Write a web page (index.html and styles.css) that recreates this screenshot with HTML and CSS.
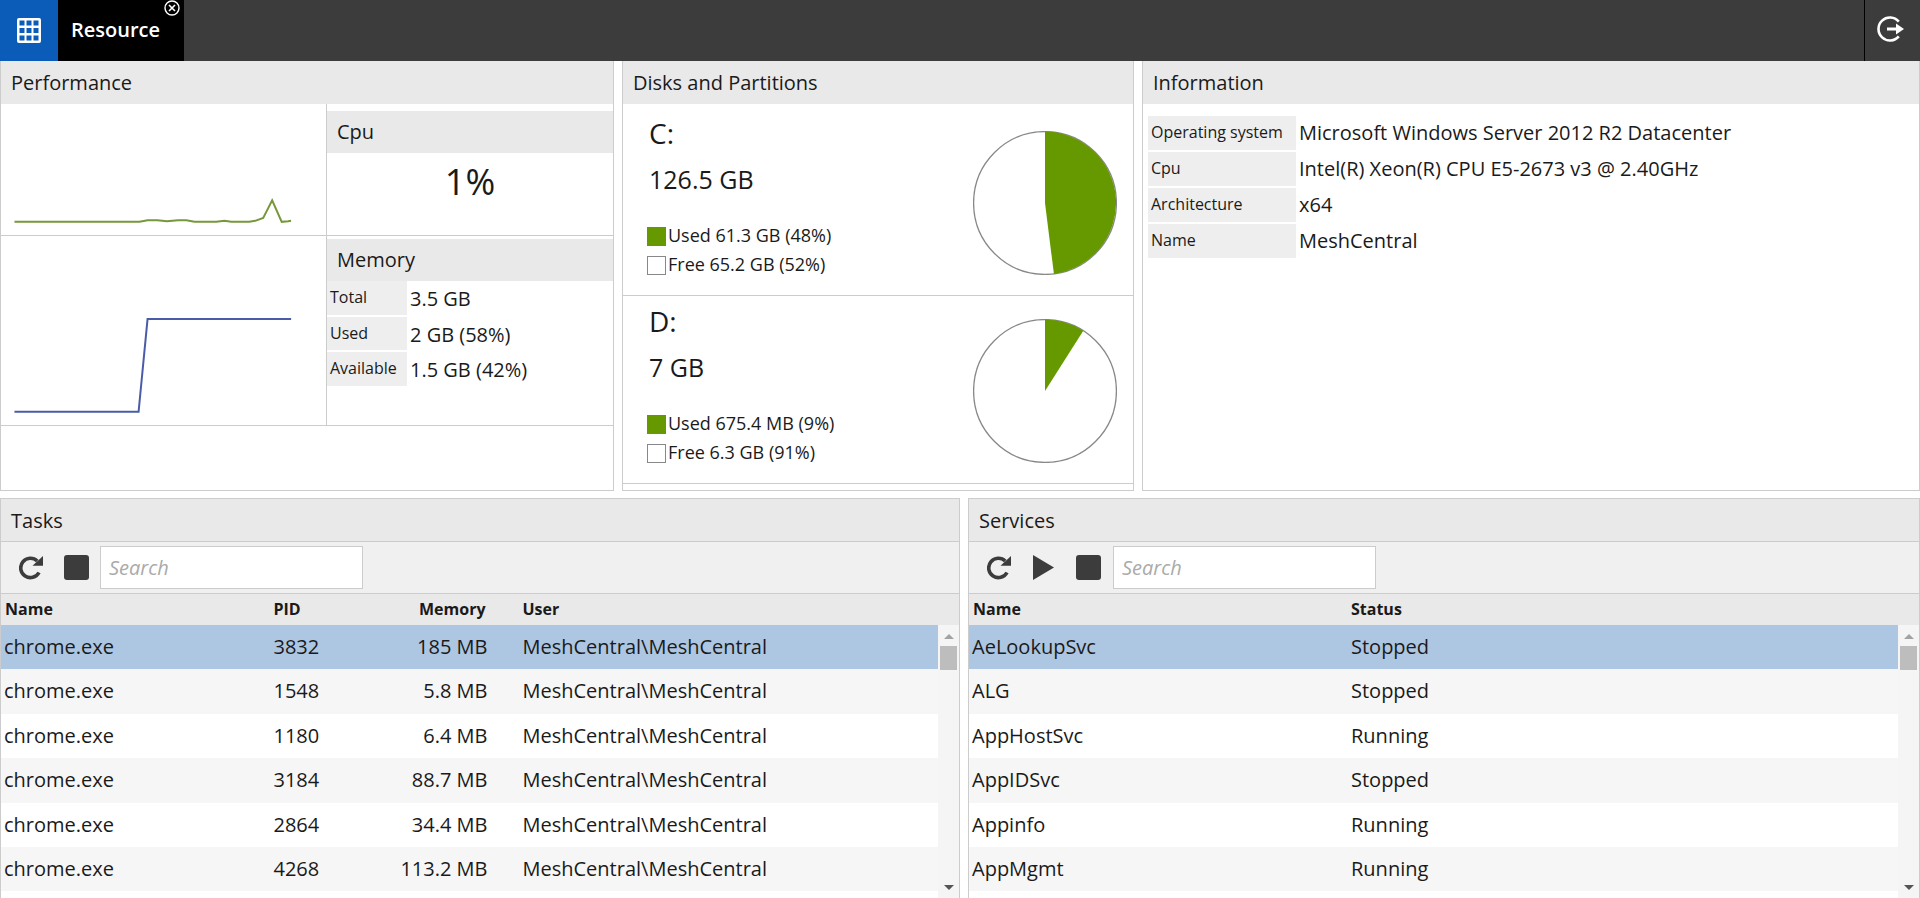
FILE: index.html
```html
<!DOCTYPE html>
<html lang="en">
<head>
<meta charset="utf-8">
<title>Resource</title>
<link rel="stylesheet" href="styles.css">
</head>
<body>
<header class="topbar">
  <div class="apps">
    <svg class="apps-icon" viewBox="0 0 24 25"><rect width="24" height="25" rx="2" fill="#fff"/><g fill="#0a5cb8"><rect x="2.5" y="2.5" width="5" height="5"/><rect x="9.5" y="2.5" width="5" height="5"/><rect x="16.5" y="2.5" width="5" height="5"/><rect x="2.5" y="10" width="5" height="5"/><rect x="9.5" y="10" width="5" height="5"/><rect x="16.5" y="10" width="5" height="5"/><rect x="2.5" y="17.5" width="5" height="5"/><rect x="9.5" y="17.5" width="5" height="5"/><rect x="16.5" y="17.5" width="5" height="5"/></g></svg>
  </div>
  <div class="tab">Resource
    <svg class="tab-close" viewBox="0 0 16 16"><circle cx="8" cy="8" r="7" fill="none" stroke="#fff" stroke-width="1.4"/><path d="M5 5l6 6M11 5l-6 6" stroke="#fff" stroke-width="1.6"/></svg>
  </div>
  <div class="logout">
    <svg class="logout-icon" viewBox="0 0 28 28"><path d="M21.800 6.600a11.500 11.500 0 1 0 0 14.800" fill="none" stroke="#fff" stroke-width="2.600"/><path d="M10 12.600h9V8.500l8 5.500-8 5.500v-4.100h-9z" fill="#fff"/></svg>
  </div>
</header>
<main class="main">
  <section class="top-row">
    <div class="panel">
      <h2 class="panel-title">Performance</h2>
      <div class="perf-row perf-cpu">
        <div class="chart">
          <svg class="chart-svg" viewBox="0 104 326 131"><polyline fill="none" stroke="#77983a" stroke-width="2" points="13.500,222 139,222 147,220.500 157,220.500 166.500,221.500 177.500,220.500 186,220.500 194,222 216,222 224,221 231,222 249,222 255,221 263,218 272,200.500 281.600,222 288,221.500 291,221"/></svg>
        </div>
        <div class="stats">
          <h3 class="stats-title">Cpu</h3>
          <div class="cpu-value">1%</div>
        </div>
      </div>
      <div class="perf-row perf-mem">
        <div class="chart">
          <svg class="chart-svg" viewBox="0 236 326 189"><polyline fill="none" stroke="#4a5ca8" stroke-width="2" points="13.500,412 138,412 147,319 291,319"/></svg>
        </div>
        <div class="stats">
          <h3 class="stats-title">Memory</h3>
          <dl class="kv kv-mem">
            <div class="kv-row"><dt>Total</dt><dd>3.5 GB</dd></div>
            <div class="kv-row"><dt>Used</dt><dd>2 GB (58%)</dd></div>
            <div class="kv-row"><dt>Available</dt><dd>1.5 GB (42%)</dd></div>
          </dl>
        </div>
      </div>
    </div>
    <div class="panel">
      <h2 class="panel-title">Disks and Partitions</h2>
      <div class="disks">
        <div class="disk">
          <div class="disk-info">
            <div class="disk-name">C:</div>
            <div class="disk-size">126.5 GB</div>
            <div class="legend"><span class="swatch used"></span>Used 61.3 GB (48%)</div>
            <div class="legend"><span class="swatch free"></span>Free 65.2 GB (52%)</div>
          </div>
          <svg class="pie" viewBox="-72 -72 144 144"><circle r="71.400" fill="#fff" stroke="#888" stroke-width="1.300"/><path d="M0 0V-71.400A71.400 71.400 0 0 1 8.900 70.800Z" fill="#669900"/></svg>
        </div>
        <div class="disk">
          <div class="disk-info">
            <div class="disk-name">D:</div>
            <div class="disk-size">7 GB</div>
            <div class="legend"><span class="swatch used"></span>Used 675.4 MB (9%)</div>
            <div class="legend"><span class="swatch free"></span>Free 6.3 GB (91%)</div>
          </div>
          <svg class="pie" viewBox="-72 -72 144 144"><circle r="71.400" fill="#fff" stroke="#888" stroke-width="1.300"/><path d="M0 0V-71.400A71.400 71.400 0 0 1 38.300 -60.200Z" fill="#669900"/></svg>
        </div>
      </div>
    </div>
    <div class="panel">
      <h2 class="panel-title">Information</h2>
      <dl class="kv kv-info">
        <div class="kv-row"><dt>Operating system</dt><dd>Microsoft Windows Server 2012 R2 Datacenter</dd></div>
        <div class="kv-row"><dt>Cpu</dt><dd>Intel(R) Xeon(R) CPU E5-2673 v3 @ 2.40GHz</dd></div>
        <div class="kv-row"><dt>Architecture</dt><dd>x64</dd></div>
        <div class="kv-row"><dt>Name</dt><dd>MeshCentral</dd></div>
      </dl>
    </div>
  </section>
  <section class="bottom-row">
    <div class="panel list-panel">
      <h2 class="panel-title">Tasks</h2>
      <div class="toolbar">
        <svg class="ico ico-refresh" viewBox="0 0 24 24"><path d="M20 16.500A9.700 9.700 0 1 1 18.200 5" fill="none" stroke="#3c3c3c" stroke-width="3.600"/><path d="M13.500 9.800H24V0z" fill="#3c3c3c"/></svg>
        <span class="ico-stop"></span>
        <div class="search">Search</div>
      </div>
      <div class="col-head tasks-cols">
        <span>Name</span><span>PID</span><span class="num">Memory</span><span>User</span>
      </div>
      <div class="list-body">
        <div class="rows">
          <div class="row tasks-cols selected"><span>chrome.exe</span><span>3832</span><span class="num">185 MB</span><span>MeshCentral\MeshCentral</span></div>
          <div class="row tasks-cols"><span>chrome.exe</span><span>1548</span><span class="num">5.8 MB</span><span>MeshCentral\MeshCentral</span></div>
          <div class="row tasks-cols"><span>chrome.exe</span><span>1180</span><span class="num">6.4 MB</span><span>MeshCentral\MeshCentral</span></div>
          <div class="row tasks-cols"><span>chrome.exe</span><span>3184</span><span class="num">88.7 MB</span><span>MeshCentral\MeshCentral</span></div>
          <div class="row tasks-cols"><span>chrome.exe</span><span>2864</span><span class="num">34.4 MB</span><span>MeshCentral\MeshCentral</span></div>
          <div class="row tasks-cols"><span>chrome.exe</span><span>4268</span><span class="num">113.2 MB</span><span>MeshCentral\MeshCentral</span></div>
        </div>
        <div class="scrollbar"><span class="arrow-up"></span><span class="thumb"></span><span class="arrow-down"></span></div>
      </div>
    </div>
    <div class="panel list-panel">
      <h2 class="panel-title">Services</h2>
      <div class="toolbar">
        <svg class="ico ico-refresh" viewBox="0 0 24 24"><path d="M20 16.500A9.700 9.700 0 1 1 18.200 5" fill="none" stroke="#3c3c3c" stroke-width="3.600"/><path d="M13.500 9.800H24V0z" fill="#3c3c3c"/></svg>
        <svg class="ico-play" viewBox="0 0 21 25"><path d="M0 0L21 12.500 0 25z" fill="#3c3c3c"/></svg>
        <span class="ico-stop"></span>
        <div class="search">Search</div>
      </div>
      <div class="col-head services-cols">
        <span>Name</span><span>Status</span>
      </div>
      <div class="list-body">
        <div class="rows">
          <div class="row services-cols selected"><span>AeLookupSvc</span><span>Stopped</span></div>
          <div class="row services-cols"><span>ALG</span><span>Stopped</span></div>
          <div class="row services-cols"><span>AppHostSvc</span><span>Running</span></div>
          <div class="row services-cols"><span>AppIDSvc</span><span>Stopped</span></div>
          <div class="row services-cols"><span>Appinfo</span><span>Running</span></div>
          <div class="row services-cols"><span>AppMgmt</span><span>Running</span></div>
        </div>
        <div class="scrollbar"><span class="arrow-up"></span><span class="thumb"></span><span class="arrow-down"></span></div>
      </div>
    </div>
  </section>
</main>
</body>
</html>
```
FILE: styles.css
```css
* { box-sizing: border-box; }
html, body { margin: 0; height: 100%; }
body {
  display: flex;
  flex-direction: column;
  height: 100vh;
  overflow: hidden;
  background: #fff;
  color: #1a1a1a;
  font-family: "Open Sans", "Noto Sans", sans-serif;
  font-size: 20px;
}
h2, h3, dl, dd { margin: 0; font-weight: 400; }

.topbar {
  flex: 0 0 61px;
  display: flex;
  background: #3c3c3c;
}
.apps {
  width: 58px;
  background: #0a5cb8;
  display: flex;
  align-items: center;
  justify-content: center;
}
.apps-icon { width: 24px; height: 25px; }
.tab {
  position: relative;
  width: 126px;
  padding-left: 13px;
  background: #000;
  color: #fff;
  font-size: 20px;
  font-weight: 600;
  line-height: 60px;
}
.tab-close { position: absolute; top: 0; left: 106px; width: 16px; height: 16px; }
.logout {
  margin-left: auto;
  width: 56px;
  border-left: 1px solid #000;
  padding: 15px 0 0 12px;
}
.logout-icon { display: block; width: 28px; height: 28px; }

.main {
  flex: 1;
  min-height: 0;
  display: flex;
  flex-direction: column;
  gap: 7px;
}
.top-row {
  flex: 0 0 430px;
  display: grid;
  grid-template-columns: 614px 512px 778px;
  column-gap: 8px;
}
.bottom-row {
  flex: 1;
  min-height: 0;
  display: grid;
  grid-template-columns: 960px 952px;
  column-gap: 8px;
}
.panel {
  border: 1px solid #ccc;
  border-top: 0;
  display: flex;
  flex-direction: column;
  min-height: 0;
  overflow: hidden;
}
.list-panel { border-top: 1px solid #ccc; border-bottom: 0; }
.panel-title {
  flex: 0 0 43px;
  padding-left: 10px;
  background: #e9e9e9;
  font-size: 20px;
  line-height: 43px;
}
.list-panel .panel-title { flex-basis: 42px; min-height: 0; overflow: hidden; }

.perf-row { display: flex; border-bottom: 1px solid #ccc; }
.perf-cpu { height: 132px; }
.perf-mem { height: 190px; }
.chart { flex: 0 0 326px; border-right: 1px solid #ccc; }
.chart-svg { display: block; width: 325px; height: 100%; }
.stats { flex: 1; }
.perf-cpu .stats { padding-top: 7px; }
.perf-mem .stats { padding-top: 3px; }
.stats-title {
  height: 42px;
  padding-left: 10px;
  background: #e9e9e9;
  font-size: 20px;
  line-height: 42px;
}
.cpu-value {
  text-align: center;
  font-size: 36px;
  line-height: 58px;
}

.kv { display: grid; row-gap: 2px; }
.kv-row { display: flex; line-height: 34px; }
.kv dt {
  background: #eee;
  font-size: 16px;
  line-height: 32px;
  padding-left: 3px;
}
.kv-mem .kv-row { height: 33.500px; }
.kv-mem dt { flex: 0 0 80px; }
.kv-mem dd { padding-left: 3px; line-height: 35px; }
.kv-info { padding: 12px 0 0 5px; }
.kv-info .kv-row { height: 34px; }
.kv-info dt { flex: 0 0 148px; }
.kv-info dd { padding-left: 3px; }

.disks { padding-top: 4px; }
.disk {
  height: 188px;
  display: flex;
  justify-content: space-between;
  padding: 23px 16px 0 24px;
  border-bottom: 1px solid #ccc;
}
.disk-info { margin-top: -18px; }
.disk-name { font-size: 28px; line-height: 40px; padding-left: 2px; }
.disk-size { font-size: 25px; line-height: 40px; padding-left: 2px; margin-top: 6px; margin-bottom: 21px; }
.legend { display: flex; align-items: center; height: 29px; font-size: 18px; line-height: 26px; }
.swatch { width: 19px; height: 19px; margin: 4px 2px 0 0; border: 1px solid #888; }
.swatch.used { background: #669900; border-color: #669900; }
.swatch.free { background: #fff; }
.pie { width: 144px; height: 144px; }

.toolbar {
  flex: 0 0 53px;
  display: flex;
  align-items: center;
  padding-left: 18px;
  background: #f0f0f0;
  border-top: 1px solid #ccc;
  border-bottom: 1px solid #ccc;
}
.ico-refresh { width: 24px; height: 24px; margin-right: 21px; }
.ico-play { width: 21px; height: 25px; margin-left: 1px; margin-right: 22px; }
.ico-stop {
  width: 25px;
  height: 25px;
  border-radius: 3px;
  background: #3c3c3c;
  margin-right: 11px;
}
.ico-play ~ .ico-stop { margin-right: 12px; }
.search {
  width: 263px;
  height: 43px;
  padding-left: 8px;
  background: #fff;
  border: 1px solid #ccc;
  color: #aaa;
  font-style: italic;
  line-height: 41px;
}

.col-head {
  flex: 0 0 31px;
  background: #e9e9e9;
  font-size: 16px;
  font-weight: 700;
  line-height: 31px;
}
.col-head > :first-child { padding-left: 1px; }
.col-head .num { padding-right: 2px; }
.list-body { flex: 1; min-height: 0; display: flex; }
.rows { flex: 1; min-width: 0; }
.row { height: 44.400px; line-height: 44px; }
.row:nth-child(even) { background: #f6f6f6; }
.row.selected { background: #adc6e2; }
.tasks-cols { display: grid; grid-template-columns: 269.500px 120px 94px 1fr; padding-left: 3px; }
.tasks-cols .num { text-align: right; }
.tasks-cols > :last-child { padding-left: 35px; }
.services-cols { display: grid; grid-template-columns: 379px 1fr; padding-left: 3px; }

.scrollbar {
  flex: 0 0 21px;
  display: flex;
  flex-direction: column;
  align-items: center;
  background: #f5f5f5;
  padding: 9px 0 8px;
}
.arrow-up {
  width: 0;
  height: 0;
  border-left: 5px solid transparent;
  border-right: 5px solid transparent;
  border-bottom: 5px solid #a3a3a3;
}
.thumb { width: 17px; height: 24px; margin-top: 7px; background: #bdbdbd; }
.arrow-down {
  width: 0;
  height: 0;
  margin-top: auto;
  border-left: 5px solid transparent;
  border-right: 5px solid transparent;
  border-top: 5px solid #555;
}
```
